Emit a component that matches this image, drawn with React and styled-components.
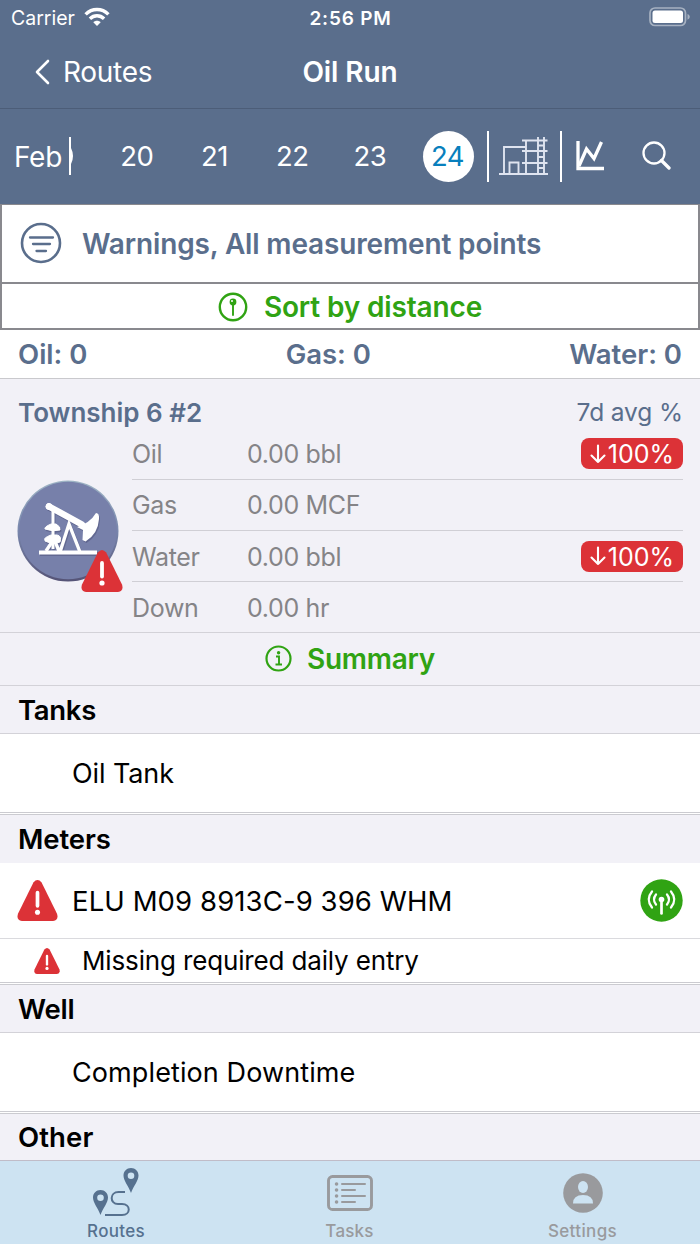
import React from 'react';
import styled, { createGlobalStyle } from 'styled-components';

const GlobalStyle = createGlobalStyle`
  * { box-sizing: border-box; }
  body {
    margin: 0;
    font-family: Inter, "Liberation Sans", sans-serif;
    background: #f2f1f7;
    color: #000;
  }
  svg { display: block; flex: none; }
`;

const slate = '#5a6e8c';
const green = '#30a313';
const red = '#dc3237';

const Screen = styled.div`
  width: 700px;
  height: 1244px;
  overflow: hidden;
  display: flex;
  flex-direction: column;
  background: #f2f1f7;
`;

const Text = styled.span`
  display: block;
  padding-top: ${(p) => (p.$drop === undefined ? 2 : p.$drop)}px;
  font-size: ${(p) => p.$size || 27}px;
  font-weight: ${(p) => p.$weight || 400};
  letter-spacing: ${(p) => p.$track || 0}px;
  line-height: 1.2;
  white-space: nowrap;
`;

const StatusBar = styled.header`
  height: 36px;
  display: grid;
  grid-template-columns: 1fr 1fr 1fr;
  align-items: center;
  padding: 0 10px 2px 11px;
  background: ${slate};
  color: #fff;
`;

const Carrier = styled.div`
  display: flex;
  align-items: center;
  gap: 9px;
`;

const Centered = styled.div`
  text-align: center;
`;

const Battery = styled.div`
  display: flex;
  justify-content: flex-end;
`;

const NavBar = styled.nav`
  height: 73px;
  display: grid;
  grid-template-columns: 1fr 1fr 1fr;
  align-items: center;
  padding: 0 34px;
  background: ${slate};
  color: #fff;
  border-bottom: 1px solid #4c5d78;
`;

const Back = styled.div`
  display: flex;
  align-items: center;
  gap: 13px;
`;

const DateBar = styled.div`
  height: 95px;
  display: flex;
  align-items: center;
  background: ${slate};
  color: #fff;
`;

const Month = styled.div`
  width: 69px;
  padding-left: 14px;
`;

const Day = styled.div`
  width: 77.7px;
  display: flex;
  justify-content: center;
`;

const DayDot = styled.div`
  width: 51px;
  height: 51px;
  border-radius: 50%;
  padding-right: 1px;
  display: flex;
  align-items: center;
  justify-content: center;
  background: ${(p) => (p.$active ? '#fff' : 'transparent')};
  color: ${(p) => (p.$active ? '#087fbd' : '#fff')};
`;

const Divider = styled.div`
  width: 2px;
  height: ${(p) => p.$h}px;
  background: #fff;
`;

const Tool = styled.div`
  width: ${(p) => p.$w}px;
  padding-bottom: ${(p) => p.$lift || 0}px;
  display: flex;
  justify-content: center;
`;

const FilterBox = styled.section`
  height: 126px;
  border: 2px solid #89898e;
  border-top-width: 1px;
  background: #fff;
`;

const Filter = styled.div`
  height: 79px;
  display: flex;
  align-items: center;
  gap: 20px;
  padding-left: 18px;
  color: ${slate};
  border-bottom: 2px solid #89898e;
`;

const Sort = styled.div`
  height: 46px;
  display: flex;
  align-items: center;
  justify-content: center;
  gap: 16px;
  color: ${green};
`;

const Totals = styled.div`
  height: 49px;
  display: flex;
  justify-content: space-between;
  align-items: center;
  padding: 0 18px;
  background: #fff;
  color: ${slate};
  border-bottom: 1px solid #c9c9cd;
`;

const Site = styled.section`
  height: 254px;
  padding: 8px 17px 0 18px;
  border-bottom: 1px solid #d3d2d8;
`;

const SiteHead = styled.div`
  height: 42px;
  display: flex;
  align-items: center;
  justify-content: space-between;
  padding-top: 7px;
  color: ${slate};
`;

const SiteBody = styled.div`
  display: flex;
  gap: 14px;
`;

const Badge = styled.div`
  position: relative;
  width: 101px;
  height: 120px;
  margin: 51px 0 0 -1px;
`;

const BadgeAlert = styled.div`
  position: absolute;
  left: 64px;
  top: 70px;
`;

const Readings = styled.div`
  flex: 1;
`;

const Reading = styled.div`
  height: ${(p) => (p.$last ? 50 : 51.2)}px;
  display: grid;
  grid-template-columns: 115px 1fr auto;
  align-items: center;
  color: #858487;
  border-bottom: ${(p) => (p.$last ? 'none' : '1px solid #d0cfd5')};
`;

const Drop = styled.div`
  width: 102px;
  height: 31px;
  display: flex;
  align-items: center;
  justify-content: center;
  gap: 2px;
  border-radius: 8px;
  background: ${red};
  color: #fff;
`;

const Summary = styled.div`
  height: 53px;
  display: flex;
  align-items: center;
  justify-content: center;
  gap: 15px;
  color: ${green};
  border-bottom: 1px solid #d3d2d8;
`;

const GroupTitle = styled.h2`
  height: ${(p) => p.$h}px;
  margin: 0;
  padding-left: 18px;
  display: flex;
  align-items: center;
  border-bottom: 1px solid ${(p) => (p.$plain ? '#f2f1f7' : '#d3d2d8')};
`;

const Item = styled.div`
  height: ${(p) => p.$h}px;
  display: flex;
  align-items: center;
  padding: 0 17px 0 ${(p) => p.$indent}px;
  gap: ${(p) => p.$gap || 0}px;
  background: #fff;
  border-bottom: ${(p) => (p.$thin ? '1px solid #dadade' : '3px double #cbcbd0')};
`;

const Spacer = styled.div`
  flex: 1;
`;

const TabBar = styled.footer`
  height: 84px;
  margin-top: auto;
  display: grid;
  grid-template-columns: 232px 235px 231px;
  background: #cde3f2;
  border-top: 1px solid #c0bcc8;
`;

const Tab = styled.div`
  display: flex;
  flex-direction: column;
  align-items: center;
  color: ${(p) => (p.$active ? '#56718f' : '#999a9d')};
`;

const TabIcon = styled.div`
  height: 60px;
  display: flex;
  align-items: center;
  padding-top: 4px;
`;

const WifiIcon = () => (
  <svg width="26" height="20" viewBox="0 0 26 20" fill="none" stroke="#fff" strokeWidth="3.4">
    <path d="M1.6 7.4C8 .9 18 .9 24.4 7.4" />
    <path d="M5.9 11.8C10 7.8 16 7.8 20.1 11.8" />
    <path d="M13 19l-3.7-3.8c2-2 5.4-2 7.4 0z" fill="#fff" stroke="none" />
  </svg>
);

const BatteryIcon = () => (
  <svg width="41" height="20" viewBox="0 0 41 20">
    <rect x="1" y="1" width="35.5" height="17.5" rx="5" fill="none" stroke="#a6b1c1" strokeWidth="1.7" />
    <rect x="3.5" y="3.5" width="30.5" height="12.5" rx="2.5" fill="#fff" />
    <path d="M38.5 7c3 1 3 4.7 0 5.7z" fill="#a6b1c1" />
  </svg>
);

const ChevronIcon = () => (
  <svg width="16" height="26" viewBox="0 0 16 26" fill="none" stroke="#fff" strokeWidth="2.6" strokeLinecap="round" strokeLinejoin="round">
    <path d="M14 2L3 13l11 11" />
  </svg>
);

const PlantIcon = () => (
  <svg width="50" height="40" viewBox="0 0 50 40" fill="none" stroke="#dfe4f0" strokeWidth="1.9">
    <path d="M0 38H49M5 38V11H27M10.5 38V26.5H19.5V38M27 4.5V38M39 1V38M45 1V38" />
    <path d="M23 4.5H48.5M23 15H48.5M23 27H48.5M39 9.5H45M39 21H45M39 32H45" />
  </svg>
);

const ChartIcon = () => (
  <svg width="28" height="30" viewBox="0 0 28 30" fill="none" stroke="#fff" strokeWidth="3.3">
    <path d="M2 0V27.5H28" />
    <path d="M3 25L10.5 8L18 17.5L25.5 1" />
  </svg>
);

const SearchIcon = () => (
  <svg width="29" height="29" viewBox="0 0 29 29" fill="none" stroke="#fff" strokeWidth="2.3">
    <circle cx="12" cy="12" r="10.5" />
    <path d="M19.5 19.5L27 27" strokeWidth="3.3" strokeLinecap="round" />
  </svg>
);

const FilterIcon = () => (
  <svg width="42" height="42" viewBox="0 0 42 42" fill="none" stroke={slate} strokeWidth="2.3" strokeLinecap="round">
    <circle cx="21" cy="21" r="19" strokeWidth="2.6" />
    <path d="M10 15.5H33M13 22H30M16.5 29H26" />
  </svg>
);

const PinIcon = () => (
  <svg width="30" height="30" viewBox="0 0 30 30" fill="none" stroke={green}>
    <circle cx="15" cy="15" r="13.2" strokeWidth="2.4" />
    <circle cx="15" cy="10" r="3.4" fill={green} stroke="none" />
    <circle cx="14" cy="9" r="1" fill="#fff" stroke="none" />
    <path d="M15 12V23" strokeWidth="1.9" strokeLinecap="round" />
  </svg>
);

const InfoIcon = () => (
  <svg width="27" height="27" viewBox="0 0 27 27" fill="none" stroke={green} strokeWidth="2.2">
    <circle cx="13.5" cy="13.5" r="12" />
    <path d="M11 11.5H14V19.5M10.5 19.5H17" strokeWidth="1.9" />
    <circle cx="13.6" cy="7.7" r="1.7" fill={green} stroke="none" />
  </svg>
);

const AlertIcon = ({ size }) => (
  <svg width={size} height={size} viewBox="0 0 42 42">
    <path d="M16.8 2.5Q21-2.5 25.2 2.5L41 34.5Q43 41 37 42H5Q-1 41 1 34.5Z" fill={red} />
    <path d="M21 13V26.5" stroke="#fff" strokeWidth="3.8" strokeLinecap="round" />
    <circle cx="21" cy="33" r="2.6" fill="#fff" />
  </svg>
);

const PumpArt = ({ fill }) => (
  <g fill={fill} stroke={fill}>
    <circle cx="32" cy="26.5" r="3" />
    <path d="M32 26.5L65 44.5" strokeWidth="6.5" strokeLinecap="round" />
    <path d="M79 33Q82.5 33 82 39Q81 54 68.5 61.5L65.5 60L66 50L60 47Q73 43 79 33Z" stroke="none" />
    <path d="M36 28V69" strokeWidth="3" fill="none" />
    <path d="M28 49Q27 47 34 44H39Q44 47 43 50Q36 52 28 49ZM28 60Q26 58 34 55H40Q45 56 43 62Q36 65 28 61Z" strokeWidth="1" />
    <path d="M29 71L37 59L42 71M43 72L52 44L63 72" strokeWidth="3.4" fill="none" />
    <path d="M22 72.5H80" strokeWidth="4" />
  </g>
);

const PumpIcon = () => (
  <svg width="102" height="102" viewBox="0 0 102 102">
    <defs>
      <linearGradient id="rim" x1="0" y1="0" x2="0" y2="1">
        <stop offset="0" stopColor="#9fb5c5" />
        <stop offset=".5" stopColor="#7886ac" />
        <stop offset="1" stopColor="#555376" />
      </linearGradient>
    </defs>
    <circle cx="51" cy="51" r="50.5" fill="url(#rim)" />
    <circle cx="51" cy="50.5" r="48.8" fill="#7780aa" />
    <g transform="translate(1 1.5)"><PumpArt fill="#626891" /></g>
    <PumpArt fill="#fff" />
  </svg>
);

const ArrowIcon = () => (
  <svg width="16" height="20" viewBox="0 0 16 20" fill="none" stroke="#fff" strokeWidth="2.1" strokeLinecap="round" strokeLinejoin="round">
    <path d="M8 1.5V18M1.5 11.5L8 18l6.5-6.5" />
  </svg>
);

const SignalIcon = () => (
  <svg width="43" height="43" viewBox="0 0 43 43" fill="none" stroke="#fff" strokeWidth="2.3" strokeLinecap="round">
    <circle cx="21.5" cy="21.5" r="21.2" fill={green} stroke="none" />
    <path d="M21.500 21V34.5" strokeWidth="2.7" />
    <circle cx="21.5" cy="20.5" r="2.8" fill="#fff" stroke="none" />
    <path d="M12 12.5Q5.5 20.5 12 28.5M31 12.5Q37.5 20.5 31 28.5M16 15.5Q12 20.5 16 25.5M27 15.5Q31 20.5 27 25.5" />
  </svg>
);

const RouteIcon = () => (
  <svg width="48" height="50" viewBox="0 0 48 50" fill="#56718f">
    <path fillRule="evenodd" d="M39 0c4.3 0 7.5 3.3 7.5 7.5C46.5 13 41.5 18 39 25C36.5 18 31.5 13 31.5 7.5C31.5 3.3 34.7 0 39 0zm0 4.5a3.3 3.3 0 1 0 0 6.6a3.3 3.3 0 0 0 0-6.6z" />
    <path fillRule="evenodd" d="M8.5 22c4.3 0 7.5 3.3 7.5 7.5C16 35 11 40 8.5 47C6 40 1 35 1 29.5C1 25.3 4.2 22 8.5 22zm0 4.5a3.3 3.3 0 1 0 0 6.6a3.3 3.3 0 0 0 0-6.6z" />
    <path d="M33 24H26.5C17.5 24 17.5 36 26 36H30C39 36 39 47 30 47H13" fill="none" stroke="#56718f" strokeWidth="2" />
  </svg>
);

const TasksIcon = () => (
  <svg width="46" height="36" viewBox="0 0 46 36" fill="none" stroke="#999a9d" strokeWidth="2.9">
    <rect x="1.5" y="1.5" width="43" height="33" rx="4" />
    <path d="M15 9H38M15 15H28M15 21H38M15 27H28" strokeWidth="2" strokeLinecap="round" />
    <path d="M9.5 9h.1M9.5 15h.1M9.5 21h.1M9.5 27h.1" strokeWidth="3.5" strokeLinecap="round" />
  </svg>
);

const PersonIcon = () => (
  <svg width="40" height="40" viewBox="0 0 40 40">
    <circle cx="20" cy="20" r="19.8" fill="#999a9d" />
    <ellipse cx="20" cy="14" rx="5" ry="6" fill="#cde3f2" />
    <path d="M10 30.5Q10 22 20 22Q30 22 30 30.5Z" fill="#cde3f2" />
  </svg>
);

const readings = [
  { name: 'Oil', value: '0.00 bbl', drop: '100%' },
  { name: 'Gas', value: '0.00 MCF' },
  { name: 'Water', value: '0.00 bbl', drop: '100%' },
  { name: 'Down', value: '0.00 hr' },
];

export default function App() {
  return (
    <Screen>
      <GlobalStyle />
      <StatusBar>
        <Carrier>
          <Text $size={19.5} $drop={4}>Carrier</Text>
          <WifiIcon />
        </Carrier>
        <Centered><Text $size={19} $weight={600} $track={0.8} $drop={4}>2:56 PM</Text></Centered>
        <Battery><BatteryIcon /></Battery>
      </StatusBar>
      <NavBar>
        <Back>
          <ChevronIcon />
          <Text $size={28} $track={-0.3}>Routes</Text>
        </Back>
        <Centered><Text $size={28} $weight={600} $track={-0.1} $drop={1}>Oil Run</Text></Centered>
      </NavBar>
      <DateBar>
        <Month><Text $size={28} $track={-0.3}>Feb</Text></Month>
        <Divider $h={38} />
        <svg width="27.5" height="20" viewBox="0 0 27.5 20">
          <path d="M0 2Q4 10 0 18Z" fill="#fff" />
        </svg>
        {['20', '21', '22', '23', '24'].map((d) => (
          <Day key={d}>
            <DayDot $active={d === '24'}><Text $size={27.5} $track={-0.5} $drop={1}>{d}</Text></DayDot>
          </Day>
        ))}
        <Divider $h={51} />
        <Tool $w={71}><PlantIcon /></Tool>
        <Divider $h={51} />
        <Tool $w={56} $lift={1}><ChartIcon /></Tool>
        <Tool $w={77} $lift={2}><SearchIcon /></Tool>
      </DateBar>

      <FilterBox>
        <Filter>
          <FilterIcon />
          <Text $size={28} $weight={600} $track={-0.15} $drop={3}>Warnings, All measurement points</Text>
        </Filter>
        <Sort>
          <PinIcon />
          <Text $size={28} $weight={600} $track={-0.15}>Sort by distance</Text>
        </Sort>
      </FilterBox>
      <Totals>
        <Text $size={27.5} $weight={600}>Oil: 0</Text>
        <Text $size={27.5} $weight={600}>Gas: 0</Text>
        <Text $size={27.5} $weight={600}>Water: 0</Text>
      </Totals>

      <Site>
        <SiteHead>
          <Text $size={26} $weight={600}>Township 6 #2</Text>
          <Text $size={24.5} $track={-0.1}>7d avg %</Text>
        </SiteHead>
        <SiteBody>
          <Badge>
            <PumpIcon />
            <BadgeAlert><AlertIcon size={42} /></BadgeAlert>
          </Badge>
          <Readings>
            {readings.map((r) => (
              <Reading key={r.name} $last={r.name === 'Down'}>
                <Text $size={25} $track={-0.35} $drop={1}>{r.name}</Text>
                <Text $size={25} $track={-0.35} $drop={1}>{r.value}</Text>
                {r.drop && <Drop><ArrowIcon /><Text $size={25} $drop={1}>{r.drop}</Text></Drop>}
              </Reading>
            ))}
          </Readings>
        </SiteBody>
      </Site>
      <Summary>
        <InfoIcon />
        <Text $size={28} $weight={600} $track={-0.25}>Summary</Text>
      </Summary>

      <GroupTitle $h={48}><Text $size={27.5} $weight={600} $track={-0.3}>Tanks</Text></GroupTitle>
      <Item $h={82} $indent={72}><Text $track={-0.1}>Oil Tank</Text></Item>
      <GroupTitle $h={48} $plain><Text $size={27.5} $weight={600} $track={-0.1}>Meters</Text></GroupTitle>
      <Item $h={76} $indent={17} $gap={14} $thin>
        <AlertIcon size={41} />
        <Text $size={27.5} $track={0.1} $drop={2}>ELU M09 8913C-9 396 WHM</Text>
        <Spacer />
        <SignalIcon />
      </Item>
      <Item $h={46} $indent={34} $gap={22}>
        <AlertIcon size={26} />
        <Text $size={26} $track={-0.15} $drop={0}>Missing required daily entry</Text>
      </Item>
      <GroupTitle $h={48}><Text $size={27.5} $weight={600} $track={-0.2}>Well</Text></GroupTitle>
      <Item $h={81} $indent={72}><Text $track={0.1}>Completion Downtime</Text></Item>
      <GroupTitle $h={46} $plain><Text $size={27.5} $weight={600} $track={0.1}>Other</Text></GroupTitle>

      <TabBar>
        <Tab $active>
          <TabIcon><RouteIcon /></TabIcon>
          <Text $size={17} $weight={500} $track={0.3} $drop={0}>Routes</Text>
        </Tab>
        <Tab>
          <TabIcon><TasksIcon /></TabIcon>
          <Text $size={17} $weight={500} $track={0.2} $drop={0}>Tasks</Text>
        </Tab>
        <Tab>
          <TabIcon><PersonIcon /></TabIcon>
          <Text $size={17} $weight={500} $track={0.35} $drop={0}>Settings</Text>
        </Tab>
      </TabBar>
    </Screen>
  );
}
